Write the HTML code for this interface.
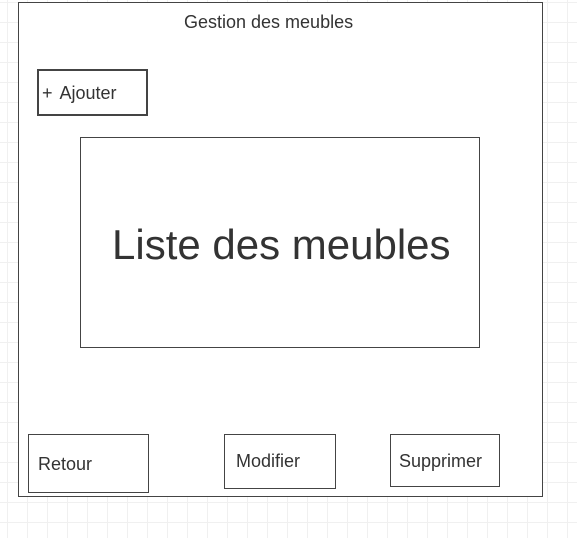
<!DOCTYPE html>
<html><head><style>
html,body{margin:0;padding:0;width:577px;height:538px;overflow:hidden;background:#fff;
background-image:linear-gradient(to right,#f0f0f0 1px,transparent 1px),linear-gradient(to bottom,#f0f0f0 1px,transparent 1px);
background-size:20px 20px;background-position:7px 2px;font-family:"Liberation Sans",sans-serif;color:#333}
div{position:absolute;box-sizing:border-box}
.t{position:absolute;white-space:nowrap}
</style></head><body>
<div style="left:18px;top:2px;width:525px;height:495px;border:1px solid #444;background:#fff"></div>
<span class="t" style="left:184px;top:12px;font-size:18px">Gestion des meubles</span>
<div style="left:37px;top:69px;width:111px;height:47px;border:2px solid #444"></div>
<span class="t" style="left:42px;top:83px;font-size:18px">+ <span style="margin-left:2px">Ajouter</span></span>
<div style="left:80px;top:137px;width:400px;height:211px;border:1px solid #444"></div>
<span class="t" style="left:112px;top:221px;font-size:42px">Liste des meubles</span>
<div style="left:28px;top:434px;width:121px;height:59px;border:1px solid #444"></div>
<span class="t" style="left:38px;top:454px;font-size:18px">Retour</span>
<div style="left:224px;top:434px;width:112px;height:55px;border:1px solid #444"></div>
<span class="t" style="left:236px;top:451px;font-size:18px">Modifier</span>
<div style="left:390px;top:434px;width:110px;height:53px;border:1px solid #444"></div>
<span class="t" style="left:399px;top:451px;font-size:18px">Supprimer</span>
</body></html>
